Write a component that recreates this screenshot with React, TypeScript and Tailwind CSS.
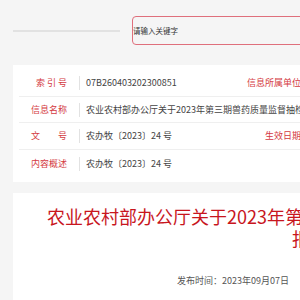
import React from "react";

const font = { fontFamily: '"Noto Sans CJK SC", "Noto Sans", sans-serif' };

function Row({
  label,
  value,
  rightLabel,
  border = true,
}: {
  label: string;
  value: string;
  rightLabel?: string;
  border?: boolean;
}) {
  return (
    <div
      className={`flex h-[27px] items-center ${border ? "border-b border-[#efefef]" : ""}`}
    >
      <div className="flex w-[228px] shrink-0 items-center">
        <div className="w-[48px] shrink-0 whitespace-pre text-right text-[9px] text-[#d43a42]">
          {label}
        </div>
        <div className="ml-[12px] h-[14px] w-px bg-[#e2e2e2]" />
        <div className="whitespace-nowrap pl-[6px] text-[9px] text-[#444]">{value}</div>
      </div>
      {rightLabel ? (
        <div className="w-[54px] shrink-0 whitespace-nowrap text-right text-[9px] text-[#d43a42]">
          {rightLabel}
        </div>
      ) : null}
    </div>
  );
}

export default function App() {
  return (
    <div className="h-[300px] w-[300px] overflow-hidden bg-[#f5f5f5]" style={font}>
      <div className="w-[640px] pl-[13px]">
        <div className="flex items-center pt-[16px]">
          <div className="h-[2px] w-[107px] bg-[#e2e2e2]" />
          <div className="ml-[12px] flex h-[29px] w-[300px] items-center rounded-[4px] border border-[#df6f7c] text-[7.5px] text-[#333]">
            请输入关键字
          </div>
        </div>

        <div className="mt-[20px] bg-white px-[6px] py-[5px]">
          <Row label="索 引 号" value="07B260403202300851" rightLabel="信息所属单位" />
          <div className="flex h-[26px] items-center border-b border-[#efefef]">
            <div className="w-[48px] shrink-0 text-right text-[9px] text-[#d43a42]">信息名称</div>
            <div className="ml-[12px] h-[14px] w-px bg-[#e2e2e2]" />
            <div className="whitespace-nowrap pl-[6px] text-[9px] text-[#444]">
              农业农村部办公厅关于2023年第三期兽药质量监督抽检情况的通报
            </div>
          </div>
          <Row label={"文\u3000\u3000号"} value="农办牧〔2023〕24 号" rightLabel="生效日期" />
          <Row label="内容概述" value="农办牧〔2023〕24 号" border={false} />
        </div>

        <div className="mt-[11px] bg-white px-[26px] pt-[12px]">
          <div className="w-[524px] text-center text-[18px] leading-[22px] text-[#c8161e]">
            农业农村部办公厅关于2023年第三期兽药质量监督抽检情况的通报
          </div>
          <div className="mt-[25px] pl-[138px] text-[9px] text-[#555]">
            发布时间：2023年09月07日
          </div>
          <div className="mt-[12px] h-px bg-[#eeeeee]" />
        </div>
      </div>
    </div>
  );
}
